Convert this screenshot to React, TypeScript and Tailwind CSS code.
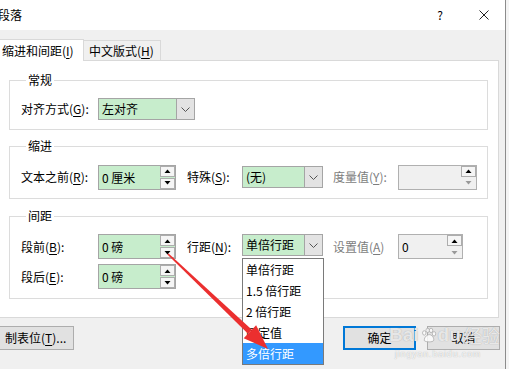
import type { ReactNode } from 'react'

function U({ children }: { children: ReactNode }) {
  return <span className="underline underline-offset-[2px]">{children}</span>
}

function Chevron() {
  return (
    <svg width="9" height="5" viewBox="0 0 9 5">
      <path d="M0.5 0.5 L4.5 4.5 L8.5 0.5" fill="none" stroke="#555" strokeWidth="1" />
    </svg>
  )
}

function Tri({ up, color = '#000' }: { up?: boolean; color?: string }) {
  return (
    <svg width="7" height="4" viewBox="0 0 7 4">
      <path d={up ? 'M0.5 4 L3.5 0.5 L6.5 4 Z' : 'M0.5 0 L3.5 3.5 L6.5 0 Z'} fill={color} />
    </svg>
  )
}

function Select({ value, w }: { value: string; w: string }) {
  return (
    <div className={`flex h-[22px] border border-[#a5a5a5] bg-[#c7edcc] ${w}`}>
      <div className="flex-1 pl-[3px] text-[12px] leading-[20px]">{value}</div>
      <div className="flex w-[18px] items-center justify-center border-l border-[#a5a5a5] bg-[#e3e3e3]">
        <Chevron />
      </div>
    </div>
  )
}

function Spin({ value, w, disabled }: { value: string; w: string; disabled?: boolean }) {
  return (
    <div className={`flex h-[25px] border ${disabled ? 'border-[#b0b0b0] bg-[#f0f0f0]' : 'border-[#a5a5a5] bg-[#c7edcc]'} ${w}`}>
      <div className="flex-1 pl-[3px] text-[12px] leading-[23px]">{value}</div>
      <div className="flex flex-col justify-between">
        <div className="flex h-[11px] w-[15px] items-center justify-center border border-[#adadad] bg-[#f5f5f5]">
          <Tri up />
        </div>
        <div
          className={`flex h-[11px] w-[15px] items-center justify-center border ${disabled ? 'border-transparent bg-[#f0f0f0]' : 'border-[#adadad] bg-[#f5f5f5]'}`}
        >
          <Tri color={disabled ? '#999' : '#000'} />
        </div>
      </div>
    </div>
  )
}

function Group({ title, children, cls }: { title: string; children: ReactNode; cls: string }) {
  return (
    <fieldset className={`w-[479px] border border-[#dcdcdc] pl-[11px] ${cls}`}>
      <legend className="ml-[5px] px-[2px] text-[12px] leading-[16px]">{title}</legend>
      {children}
    </fieldset>
  )
}

const items = ['单倍行距', '1.5 倍行距', '2 倍行距', '固定值', '多倍行距']

export default function App() {
  return (
    <div className="relative flex h-[369px] w-[509px] overflow-hidden bg-[#f0f0f0] font-['Noto_Sans_CJK_SC','Noto_Sans',sans-serif] text-[12px] text-black">
      <div className="flex w-[505px] flex-col">
        {/* Title bar */}
        <div className="flex h-[30px] shrink-0 items-center bg-white">
          <span className="ml-[-2px] text-[12px] leading-[16px]">段落</span>
          <span className="ml-auto w-[10px] text-center text-[12px]">?</span>
          <svg className="ml-[34px] mr-[16px]" width="10" height="10" viewBox="0 0 10 10">
            <path d="M0.5 0.5 L9.5 9.5 M9.5 0.5 L0.5 9.5" stroke="#222" strokeWidth="1" />
          </svg>
        </div>

        {/* Tabs */}
        <div className="flex h-[30px] shrink-0 items-end">
          <div className="relative z-10 mb-[-1px] flex h-[22px] w-[84px] items-center border-t border-r border-[#d9d9d9] bg-white pl-[2px] leading-[16px]">
            缩进和间距(<U>I</U>)
          </div>
          <div className="flex h-[20px] w-[77px] items-center border-t border-r border-[#d9d9d9] pl-[5px] leading-[16px]">
            中文版式(<U>H</U>)
          </div>
        </div>

        {/* Panel */}
        <div className="flex h-[258px] w-[499px] shrink-0 flex-col border border-l-0 border-[#d9d9d9] bg-white pl-[9px]">
          <Group title="常规" cls="mt-[11px] pt-[10px] pb-[9px]">
            <div className="flex h-[22px] items-center">
              <span className="w-[77px]">
                对齐方式(<U>G</U>):
              </span>
              <Select value="左对齐" w="w-[97px]" />
            </div>
          </Group>

          <Group title="缩进" cls="mt-[8px] pt-[10px] pb-[8px]">
            <div className="flex h-[26px] items-center">
              <span className="w-[77px]">
                文本之前(<U>R</U>):
              </span>
              <Spin value="0 厘米" w="w-[78px]" />
              <span className="ml-[11px] w-[55px]">
                特殊(<U>S</U>):
              </span>
              <Select value="(无)" w="w-[81px]" />
              <span className="ml-[10px] w-[65px] text-[#7d7d7d]">
                度量值(<U>Y</U>):
              </span>
              <Spin value="" w="w-[79px]" disabled />
            </div>
          </Group>

          <Group title="间距" cls="mt-[9px] pt-[10px] pb-[9px]">
            <div className="flex h-[25px] items-center">
              <span className="w-[77px]">
                段前(<U>B</U>):
              </span>
              <Spin value="0 磅" w="w-[78px]" />
              <span className="ml-[11px] w-[55px]">
                行距(<U>N</U>):
              </span>
              <div className="self-start">
                <Select value="单倍行距" w="w-[81px]" />
              </div>
              <span className="ml-[10px] w-[65px] text-[#7d7d7d]">
                设置值(<U>A</U>)
              </span>
              <Spin value="0" w="w-[65px]" disabled />
            </div>
            <div className="mt-[5px] flex h-[25px] items-center">
              <span className="w-[77px]">
                段后(<U>E</U>):
              </span>
              <Spin value="0 磅" w="w-[78px]" />
            </div>
          </Group>
        </div>

        {/* Bottom buttons */}
        <div className="flex items-start pt-[8px]">
          <div className="flex h-[24px] w-[74px] items-center border border-l-0 border-[#adadad] bg-[#e1e1e1] pl-[5px]">
            制表位(<U>T</U>)...
          </div>
          <div className="ml-[269px] flex h-[24px] w-[73px] items-center justify-center border-2 border-[#0078d7] bg-[#e1e1e1]">
            确定
          </div>
          <div className="ml-[11px] flex h-[24px] w-[73px] items-center justify-center border border-[#adadad] bg-[#e1e1e1]">
            取消
          </div>
        </div>
      </div>
      <div className="w-[1px] bg-[#8c8c8c]" />
      <div className="flex-1 bg-[#f4f4f4]" />

      {/* Line spacing dropdown */}
      <div className="absolute left-[242px] top-[258px] z-20 w-[82px] border border-[#7a7a7a] bg-white">
        {items.map((t, i) => (
          <div
            key={t}
            className={`h-[21px] pl-[3px] text-[12px] leading-[21px] ${i === 4 ? 'bg-[#3399ff] text-white' : ''}`}
          >
            {t}
          </div>
        ))}
      </div>

      {/* Watermark */}
      <div className="pointer-events-none absolute left-[389px] top-[324px] z-30 flex flex-col items-start whitespace-nowrap text-white/75 [text-shadow:0_0_1px_#9a9a9a]">
        <div className="flex items-center font-['Liberation_Sans',sans-serif] text-[19px] font-bold leading-[22px]">
          <span>Bai</span>
          <svg width="17" height="17" viewBox="0 0 20 20" className="mx-[1px]">
            <g fill="rgba(255,255,255,0.8)" stroke="#a0a0a0" strokeWidth="0.8">
              <ellipse cx="5" cy="7" rx="2" ry="2.6" />
              <ellipse cx="9" cy="4" rx="2" ry="2.6" />
              <ellipse cx="13" cy="4" rx="2" ry="2.6" />
              <ellipse cx="16.5" cy="8" rx="2" ry="2.6" />
              <path d="M5 16 C5 11 9 9 11 9 C14 9 17 13 16 16 C15 18 7 18 5 16 Z" />
            </g>
          </svg>
          <span>du</span>
          <span className="ml-[3px] font-['Noto_Sans_CJK_SC',sans-serif] text-[18px] font-normal">经验</span>
        </div>
        <div className="ml-[6px] mt-[3px] font-['Liberation_Sans',sans-serif] text-[9px] leading-[10px] tracking-[0.8px] text-white/90">
          jingyan.baidu.com
        </div>
      </div>

      {/* Red arrow */}
      <svg className="pointer-events-none absolute left-0 top-0 z-40" width="509" height="369" viewBox="0 0 509 369">
        <polygon points="168.6,253.4 167.4,254.6 248,333.8 251.9,329.8" fill="#eb2f2f" />
        <polygon points="268,349 243.7,338.3 256.1,325.3" fill="#eb2f2f" />
      </svg>
    </div>
  )
}
